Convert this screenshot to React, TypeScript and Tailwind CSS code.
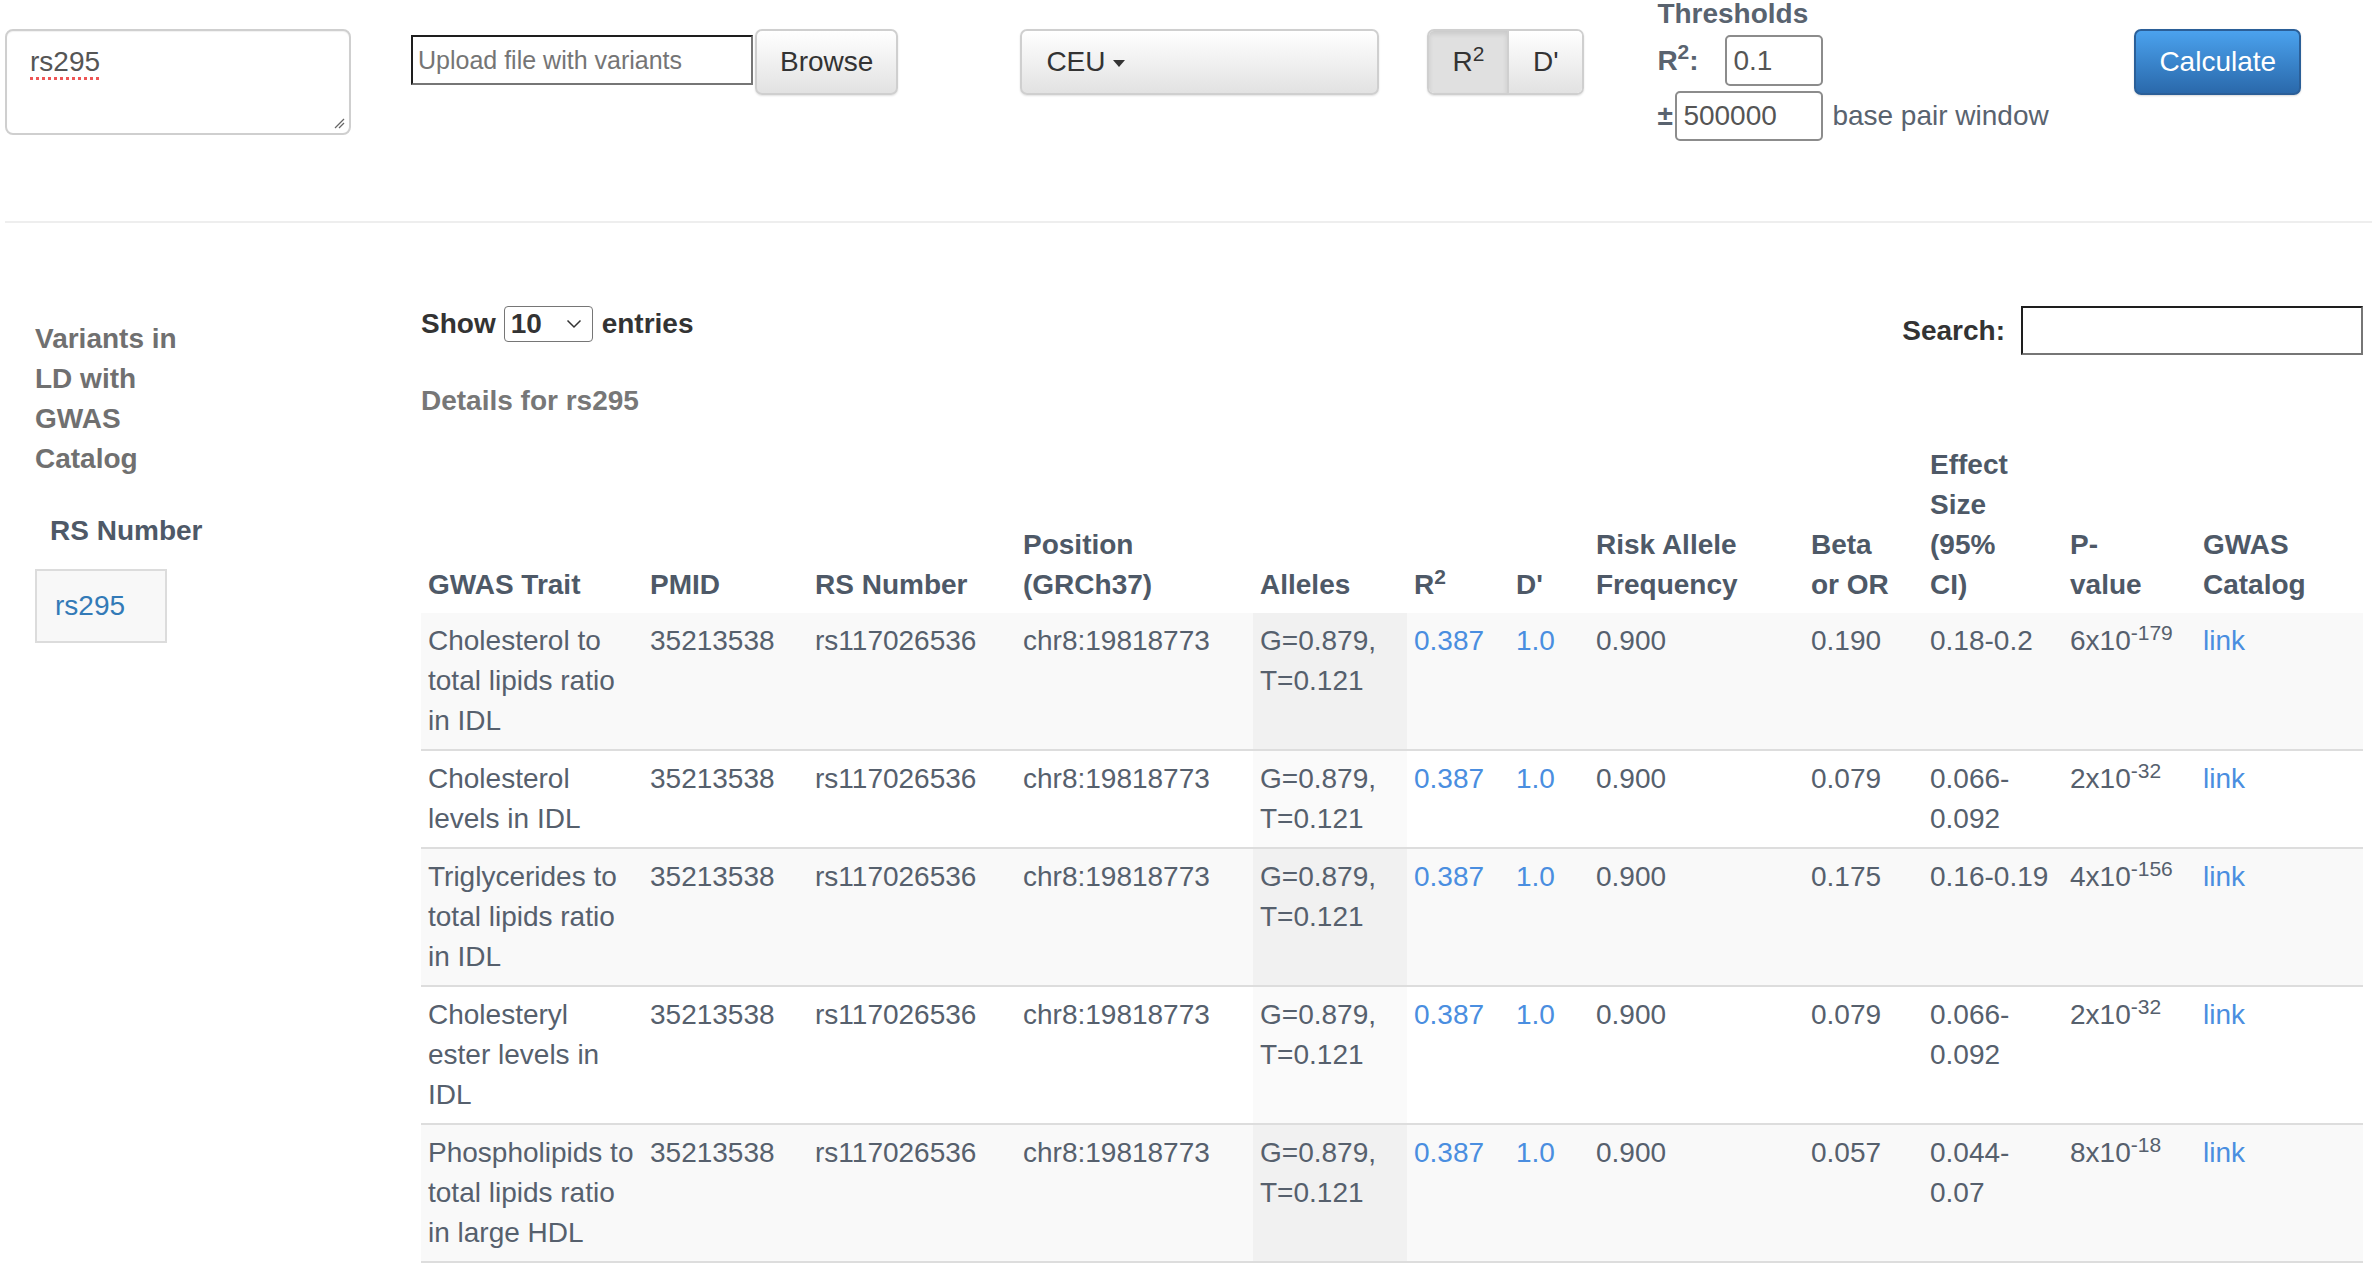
import React, { Fragment } from "react";

type Row = {
  trait: string[];
  beta: string;
  ci: string[];
  p: [string, string];
};

const rows: Row[] = [
  { trait: ["Cholesterol to", "total lipids ratio", "in IDL"], beta: "0.190", ci: ["0.18-0.2"], p: ["6", "179"] },
  { trait: ["Cholesterol", "levels in IDL"], beta: "0.079", ci: ["0.066-", "0.092"], p: ["2", "32"] },
  { trait: ["Triglycerides to", "total lipids ratio", "in IDL"], beta: "0.175", ci: ["0.16-0.19"], p: ["4", "156"] },
  { trait: ["Cholesteryl", "ester levels in", "IDL"], beta: "0.079", ci: ["0.066-", "0.092"], p: ["2", "32"] },
  { trait: ["Phospholipids to", "total lipids ratio", "in large HDL"], beta: "0.057", ci: ["0.044-", "0.07"], p: ["8", "18"] },
];

function Lines({ lines }: { lines: string[] }) {
  return (
    <>
      {lines.map((l, i) => (
        <Fragment key={i}>
          {i > 0 && <br />}
          {l}
        </Fragment>
      ))}
    </>
  );
}

const cols = [222, 165, 208, 237, 154, 102, 80, 215, 119, 140, 133, 167];

export default function App() {
  const th = "pl-[7px] pr-0 pt-[8px] pb-[8px] align-bottom text-left font-bold whitespace-nowrap";
  const td = "pl-[7px] pr-0 py-[8px] align-top whitespace-nowrap";
  return (
    <div className="min-h-screen w-full bg-white font-['Liberation_Sans',Arial,sans-serif] text-[28px] leading-[40px] text-[#333]">
      {/* Top bar */}
      <div className="flex h-[221px] items-start pl-[5px]">
        {/* textarea */}
        <div className="relative mt-[29px] h-[106px] w-[346px] shrink-0 rounded-[8px] border-2 border-[#cfcfcf] bg-white pl-[23px] pt-[11px] text-[#555] shadow-[inset_0_1px_1px_rgba(0,0,0,0.06)]">
          <span className="underline decoration-[#e55] decoration-dotted decoration-[3px] underline-offset-[6px]">rs295</span>
          <svg className="absolute bottom-[4px] right-[4px]" width="12" height="12" viewBox="0 0 12 12">
            <line x1="11" y1="2" x2="2" y2="11" stroke="#666" strokeWidth="1.2" />
            <line x1="11" y1="6" x2="6" y2="11" stroke="#666" strokeWidth="1.2" />
          </svg>
        </div>

        {/* file input group */}
        <div className="ml-[60px] mt-[29px] flex shrink-0 items-start">
          <div className="mt-[6px] flex h-[50px] w-[342px] shrink-0 items-center border-2 border-b-[#767676] border-l-[#1e1e1e] border-r-[#767676] border-t-[#1e1e1e] bg-white pl-[5px] text-[25px] text-[#757575]">
            Upload file with variants
          </div>
          <div className="ml-[2px] h-[66px] shrink-0 rounded-[7px] border-2 border-[#cfcfcf] bg-gradient-to-b from-white to-[#e2e2e2] px-[23px] py-[11px] text-[#333] shadow-[0_1px_2px_rgba(0,0,0,0.12)]">
            Browse
          </div>
        </div>

        {/* population dropdown */}
        <div className="ml-[122px] mt-[29px] flex h-[66px] w-[359px] shrink-0 items-center rounded-[7px] border-2 border-[#cfcfcf] bg-gradient-to-b from-white to-[#e2e2e2] pl-[24px] text-[#333] shadow-[0_1px_2px_rgba(0,0,0,0.12)]">
          <span>CEU</span>
          <span className="ml-[7px] mt-[2px] h-0 w-0 border-x-[6px] border-t-[7px] border-x-transparent border-t-[#333]" />
        </div>

        {/* R2 / D' toggle */}
        <div className="ml-[48px] mt-[29px] flex h-[66px] shrink-0 overflow-hidden rounded-[7px] border-2 border-[#cfcfcf] shadow-[0_1px_2px_rgba(0,0,0,0.12)]">
          <div className="flex w-[78px] items-center justify-center bg-[#e0e0e0] text-[#333] shadow-[inset_0_3px_5px_rgba(0,0,0,0.1)]">
            <span>
              R<sup>2</sup>
            </span>
          </div>
          <div className="flex w-[75px] items-center justify-center border-l-2 border-[#cfcfcf] bg-gradient-to-b from-white to-[#e2e2e2] text-[#333]">
            D'
          </div>
        </div>

        {/* thresholds */}
        <div className="ml-[73px] flex w-[404px] shrink-0 flex-col text-[#59636f]">
          <div className="h-[28px] font-bold leading-[28px]">Thresholds</div>
          <div className="mt-[7px] flex items-center">
            <span className="w-[68px] font-bold">
              R<sup>2</sup>:
            </span>
            <div className="flex h-[51px] w-[98px] items-center rounded-[5px] border-2 border-[#8c8c8c] pl-[6px] text-[#555]">
              0.1
            </div>
          </div>
          <div className="mt-[5px] flex items-center">
            <span className="w-[18px] font-bold">±</span>
            <div className="flex h-[50px] w-[148px] items-center rounded-[5px] border-2 border-[#8c8c8c] pl-[6px] text-[#555]">
              500000
            </div>
            <span className="ml-[9px] whitespace-nowrap">base pair window</span>
          </div>
        </div>

        {/* calculate */}
        <div className="ml-[73px] mt-[29px] h-[66px] shrink-0 rounded-[7px] border-2 border-[#2b5f98] bg-gradient-to-b from-[#4ba2ee] to-[#2a69ab] px-[23px] py-[11px] text-white shadow-[0_1px_2px_rgba(0,0,0,0.15)]">
          Calculate
        </div>
      </div>

      <div className="ml-[5px] h-[2px] bg-[#eeeeee]" />

      {/* Body */}
      <div className="flex">
        {/* sidebar */}
        <div className="w-[421px] shrink-0 pl-[35px] pt-[96px]">
          <div className="w-[165px] font-bold text-[#707070]">Variants in LD with GWAS Catalog</div>
          <div className="mt-[32px] pl-[15px] font-bold text-[#4e5967]">RS Number</div>
          <div className="mt-[18px] flex h-[74px] w-[132px] items-center border-2 border-[#dcdcdc] bg-[#f8f8f8] pl-[18px] text-[#337ab7]">
            rs295
          </div>
        </div>

        {/* main */}
        <div className="w-[1942px] shrink-0 pt-[81px]">
          <div className="flex h-[51px] items-start justify-between">
            <div className="flex h-[40px] items-center font-bold text-[#333]">
              <span>Show</span>
              <div className="ml-[8px] flex h-[36px] w-[89px] items-center rounded-[4px] border border-[#767676] bg-white pl-[6px] leading-[32px]">
                <span>10</span>
                <svg className="ml-auto mr-[10px]" width="16" height="10" viewBox="0 0 16 10">
                  <path d="M1.5 1.5 L8 8 L14.5 1.5" fill="none" stroke="#333" strokeWidth="1.5" />
                </svg>
              </div>
              <span className="ml-[9px]">entries</span>
            </div>
            <div className="mt-[2px] flex items-center font-bold text-[#333]">
              <span>Search:</span>
              <div className="ml-[16px] h-[49px] w-[342px] border-2 border-b-[#767676] border-l-[#1e1e1e] border-r-[#767676] border-t-[#1e1e1e] bg-white" />
            </div>
          </div>

          <div className="mt-[26px] font-bold text-[#777]">Details for rs295</div>

          <table className="mt-[16px] w-[1942px] table-fixed border-collapse text-[#56606d]">
            <colgroup>
              {cols.map((w, i) => (
                <col key={i} style={{ width: w }} />
              ))}
            </colgroup>
            <thead className="text-[#4e5967]">
              <tr>
                <th className={th}>GWAS Trait</th>
                <th className={th}>PMID</th>
                <th className={th}>RS Number</th>
                <th className={th}>
                  <Lines lines={["Position", "(GRCh37)"]} />
                </th>
                <th className={th}>Alleles</th>
                <th className={th}>
                  R<sup>2</sup>
                </th>
                <th className={th}>D'</th>
                <th className={th}>
                  <Lines lines={["Risk Allele", "Frequency"]} />
                </th>
                <th className={th}>
                  <Lines lines={["Beta", "or OR"]} />
                </th>
                <th className={th}>
                  <Lines lines={["Effect", "Size", "(95%", "CI)"]} />
                </th>
                <th className={th}>
                  <Lines lines={["P-", "value"]} />
                </th>
                <th className={th}>
                  <Lines lines={["GWAS", "Catalog"]} />
                </th>
              </tr>
            </thead>
            <tbody>
              {rows.map((r, i) => {
                const odd = i % 2 === 0;
                return (
                  <tr key={i} className={`border-b-2 border-[#dddddd] ${odd ? "bg-[#f9f9f9]" : "bg-white"}`}>
                    <td className={td}>
                      <Lines lines={r.trait} />
                    </td>
                    <td className={td}>35213538</td>
                    <td className={td}>rs117026536</td>
                    <td className={td}>chr8:19818773</td>
                    <td className={`${td} ${odd ? "bg-[#f1f1f1]" : "bg-[#fafafa]"}`}>
                      <Lines lines={["G=0.879,", "T=0.121"]} />
                    </td>
                    <td className={`${td} text-[#4a8ee0]`}>0.387</td>
                    <td className={`${td} text-[#4a8ee0]`}>1.0</td>
                    <td className={td}>0.900</td>
                    <td className={td}>{r.beta}</td>
                    <td className={td}>
                      <Lines lines={r.ci} />
                    </td>
                    <td className={td}>
                      {r.p[0]}x10<sup>-{r.p[1]}</sup>
                    </td>
                    <td className={`${td} text-[#4a8ee0]`}>link</td>
                  </tr>
                );
              })}
            </tbody>
          </table>
        </div>
      </div>
    </div>
  );
}
